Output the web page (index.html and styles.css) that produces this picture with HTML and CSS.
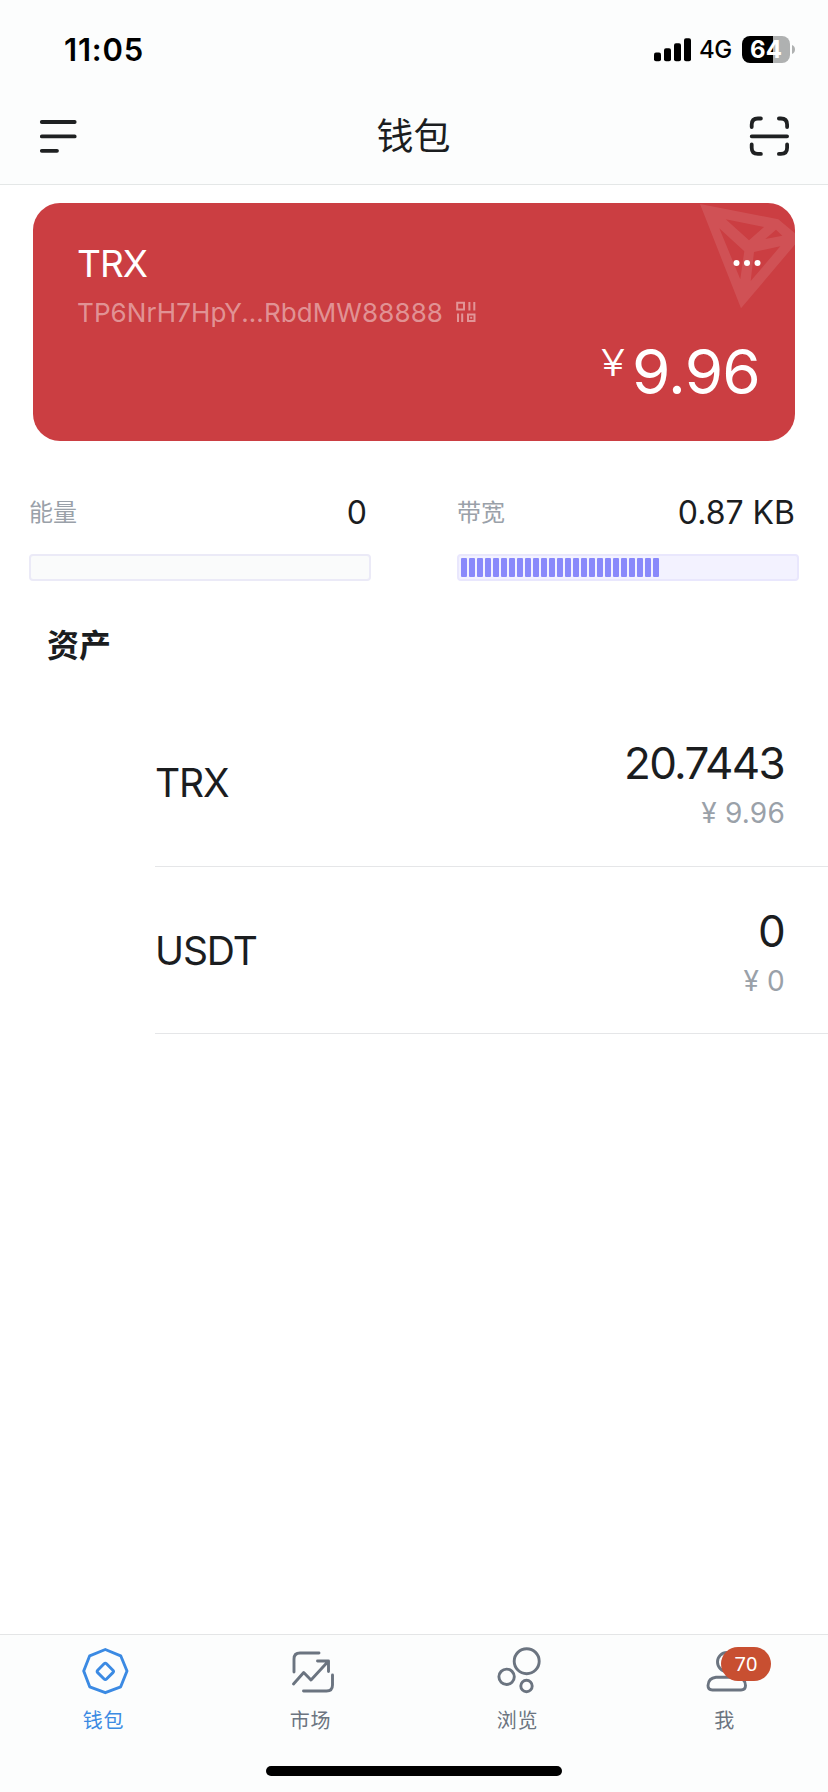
FILE: index.html
```html
<!DOCTYPE html>
<html lang="zh-CN">
<head>
<meta charset="utf-8">
<title>钱包</title>
<link rel="stylesheet" href="styles.css">
</head>
<body>
<div class="app">
  <header class="top">
    <div class="status">
      <span class="time">11:05</span>
      <div class="status-right">
        <svg class="signal" width="37" height="24" viewBox="0 0 37 24"><rect x="0" y="14.500" width="7" height="8.700" rx="2"/><rect x="10" y="10.300" width="7" height="12.900" rx="2"/><rect x="20" y="5.200" width="7" height="18" rx="2"/><rect x="30" y="0.200" width="7" height="23" rx="2"/></svg>
        <span class="net">4G</span>
        <div class="battery"><span>64</span></div>
        <svg class="nub" width="3" height="9" viewBox="0 0 3 9"><path d="M0 0Q3 1.200 3 4.500T0 9Z"/></svg>
      </div>
    </div>
    <nav class="navbar">
      <svg width="40" height="40" viewBox="0 0 40 40" class="stroke-icon"><path d="M3.800 6H36.700M3.800 20.400H36.700M3.800 34.800H19" /></svg>
      <h1>钱包</h1>
      <svg width="40" height="40" viewBox="0 0 40 40" class="stroke-icon"><path d="M2.700 11V8.700Q2.700 2.500 8.900 2.500H11.900M29.900 2.500H31.900Q38.100 2.500 38.100 8.700V11M2.700 28.500V31.700Q2.700 37.900 8.900 37.900H11.900M29.900 37.900H31.900Q38.100 37.900 38.100 31.700V28.500M2.700 20.300H38.100"/></svg>
    </nav>
  </header>

  <main class="content">
    <section class="card">
      <svg class="watermark" width="100" height="110" viewBox="0 0 100 110"><path fill-rule="evenodd" d="M5 1L83.300 16.300L105.500 35L46 105.300ZM30.700 16.300L69 24L54 37.300ZM24.300 25.300L49.300 48.300L45.300 76.300ZM81 26.700L87.300 32.700L70.300 36ZM59 49L85.300 43.300L55.700 78Z"/></svg>
      <div class="card-head">
        <h2>TRX</h2>
        <svg width="28" height="8" viewBox="0 0 28 8" class="dots"><circle cx="3.500" cy="4" r="3"/><circle cx="14" cy="4" r="3"/><circle cx="24.500" cy="4" r="3"/></svg>
      </div>
      <div class="address">
        <span>TP6NrH7HpY...RbdMW88888</span>
        <svg width="20" height="22" viewBox="0 0 20 22"><path d="M1.200 1.700H8V8.500H1.200ZM12 13.500H18.500V20H12ZM13.400 1V9.500M18.300 1V9.500M2 12.500V21M6.200 12.500V21"/><path d="M15.200 15.800V17.700"/></svg>
      </div>
      <div class="balance"><span class="yen">¥</span><span class="sum">9.96</span></div>
    </section>

    <section class="resources">
      <div class="resource">
        <div class="resource-row"><span class="label">能量</span><span class="value">0</span></div>
        <div class="bar"></div>
      </div>
      <div class="resource">
        <div class="resource-row"><span class="label">带宽</span><span class="value">0.87 KB</span></div>
        <div class="bar bar-band"><div class="ticks"><i></i><i></i><i></i><i></i><i></i><i></i><i></i><i></i><i></i><i></i><i></i><i></i><i></i><i></i><i></i><i></i><i></i><i></i><i></i><i></i><i></i><i></i><i></i><i></i><i></i></div></div>
      </div>
    </section>

    <h3>资产</h3>
    <ul class="assets">
      <li><span class="name">TRX</span><div class="amount"><b>20.7443</b><small>¥ 9.96</small></div></li>
      <li><span class="name">USDT</span><div class="amount"><b>0</b><small>¥ 0</small></div></li>
    </ul>
  </main>

  <footer class="tabbar">
    <div class="tabs">
      <div class="tab active">
        <svg width="50" height="50" viewBox="0 0 50 50"><path d="M25.300 4.500L40.700 10.800L47 26L40.700 41.800L25.300 47.700L9.700 41.800L3.700 26L9.700 10.800Z"/><path d="M26.500 18.800L32.900 25.200Q34.100 26.400 32.900 27.600L26.500 34Q25.300 35.200 24.100 34L17.700 27.600Q16.500 26.400 17.700 25.200L24.100 18.800Q25.300 17.600 26.500 18.800Z"/></svg>
        <span>钱包</span>
      </div>
      <div class="tab">
        <svg width="50" height="50" viewBox="0 0 50 50"><path d="M7 27V14Q7 8 13 8H32M45.500 30V40Q45.500 46 39.500 46H16.500M6.500 39L16.700 27.500L24 35L41.500 16M30.500 16H41.500V26.500"/></svg>
        <span>市场</span>
      </div>
      <div class="tab">
        <svg width="50" height="50" viewBox="0 0 50 50"><circle cx="32.700" cy="16.200" r="12.500"/><circle cx="12.600" cy="31.800" r="7.700"/><circle cx="32.500" cy="41" r="5.700"/></svg>
        <span>浏览</span>
      </div>
      <div class="tab">
        <svg width="50" height="50" viewBox="0 0 50 50"><circle cx="26" cy="17" r="9.500"/><path d="M15 32.300H35.500Q44.500 33 44.500 40.500Q44.500 45 40 45H11.500Q7 45 7 40.500Q7.500 33 15 32.300Z"/></svg>
        <em class="badge">70</em>
        <span>我</span>
      </div>
    </div>
    <div class="home"></div>
  </footer>
</div>
</body>
</html>
```

FILE: styles.css
```css
* { box-sizing: border-box; margin: 0; padding: 0; }
body { background: #fff; font-family: Inter, "Noto Sans CJK SC", sans-serif; color: #1b1d1f; }
svg { display: block; flex: none; }
.app { width: 828px; height: 1792px; display: flex; flex-direction: column; overflow: hidden; }

.top { height: 185px; background: #fcfdfd; border-bottom: 1px solid #e4e7e7; }
.status { height: 100px; padding: 30px 33px 0 64px; display: flex; justify-content: space-between; color: #000; }
.time { font-size: 31px; font-weight: 600; line-height: 40px; letter-spacing: 0.8px; }
.status-right { height: 39px; display: flex; align-items: center; }
.signal { margin-right: 8px; }
.net { width: 35px; margin-right: 8px; font-size: 24px; font-weight: 500; line-height: 42px; letter-spacing: -0.4px; }
.battery { width: 48px; height: 27px; border-radius: 8px; background: linear-gradient(90deg, #000 31px, #afb1b1 31px); color: #fff; font-size: 24px; font-weight: 700; line-height: 27px; text-align: center; }
.nub { margin-left: 2px; fill: #afb1b1; }
.navbar { height: 72px; padding: 0 39px 0 38px; display: flex; justify-content: space-between; align-items: center; }
.stroke-icon { fill: none; stroke: #1f2122; stroke-width: 3.8; stroke-linecap: round; }
h1 { padding-bottom: 4px; font-family: "Noto Sans CJK SC", sans-serif; font-size: 37px; font-weight: 400; line-height: 50px; }

.content { flex: 1; padding-top: 18px; }
.card { position: relative; overflow: hidden; width: 762px; height: 238px; margin-left: 33px; padding: 40px 34px 0 44px; border-radius: 27px; background: #cb3e42; color: #fff; }
.watermark { position: absolute; top: 0; right: 0; fill: rgba(255,255,255,.1); }
.card-head { position: relative; display: flex; justify-content: space-between; height: 41px; align-items: center; }
h2 { font-size: 37px; font-weight: 400; line-height: 41px; letter-spacing: -1px; }
.dots { margin-bottom: 2px; fill: #fff; }
.address { display: flex; align-items: center; height: 56px; font-size: 26px; letter-spacing: .1px; color: rgba(255,255,255,.45); }
.address svg { margin-left: 13px; fill: none; stroke: currentColor; stroke-width: 2; }
.balance { display: flex; justify-content: flex-end; align-items: flex-start; height: 70px; padding-right: 1px; }
.yen { margin-right: 9px; font-size: 37px; line-height: 46px; font-weight: 300; transform: scaleX(1.2); }
.sum { font-size: 62px; line-height: 64px; font-weight: 400; letter-spacing: -0.8px; }

.resources { display: flex; gap: 86px; padding: 46px 29px 0; }
.resource { width: 342px; }
.resource-row { display: flex; justify-content: space-between; height: 50px; padding: 0 4px 0 0; align-items: center; }
.label { padding-bottom: 3px; font-family: "Noto Sans CJK SC", sans-serif; font-size: 24px; color: #9aa1a9; font-weight: 400; }
.value { padding-top: 1px; font-size: 32px; line-height: 47px; letter-spacing: 0; }
.bar { height: 27px; margin-top: 17px; border: 2px solid #ebeaf7; border-radius: 4px; background: #fafbfb; }
.bar-band { background: #f3f2ff; border-color: #e9e7fd; }
.ticks { display: flex; gap: 2px; padding: 2px; }
.ticks i { width: 6px; height: 19px; border-radius: 1px; background: #8989fb; }

h3 { padding: 37px 47px 0; font-family: "Noto Sans CJK SC", sans-serif; font-size: 32px; line-height: 50px; font-weight: 700; }
.assets { list-style: none; padding-left: 155px; margin-top: 32px; }
.assets li { height: 167px; padding: 36px 43px 0 0; display: flex; justify-content: space-between; border-bottom: 1px solid #e5e6e8; }
.assets li + li { padding-top: 37px; }
.name { padding-top: 22px; font-size: 39px; line-height: 50px; letter-spacing: -1.1px; }
.amount { display: flex; flex-direction: column; align-items: flex-end; }
.amount b { margin-right: 1px; font-size: 44px; line-height: 54px; font-weight: 400; letter-spacing: -1.7px; }
.amount small { font-size: 28px; line-height: 46px; letter-spacing: .2px; color: #9aa1a9; }

.tabbar { height: 158px; background: #fcfdfd; border-top: 1px solid #e4e5e6; }
.tabs { display: grid; grid-template-columns: repeat(4, 207px); height: 131px; }
.tab { position: relative; padding-top: 10px; color: #6b7480; }
.tab svg { margin-left: 80px; fill: none; stroke: currentColor; stroke-width: 2.9; stroke-linecap: round; stroke-linejoin: round; }
.tab span { display: block; margin-top: 10px; font-family: "Noto Sans CJK SC", sans-serif; font-size: 20px; line-height: 30px; text-align: center; letter-spacing: .7px; font-weight: 400; }
.tab.active { color: #3b8ae3; }
.badge { position: absolute; left: 100px; top: 12px; width: 50px; height: 34px; border-radius: 17px; background: #c84f31; color: #fff; font: normal 20px/34px "Noto Sans", sans-serif; text-align: center; }
.home { width: 296px; height: 10px; margin: 0 auto; border-radius: 5px; background: #000; }
```
